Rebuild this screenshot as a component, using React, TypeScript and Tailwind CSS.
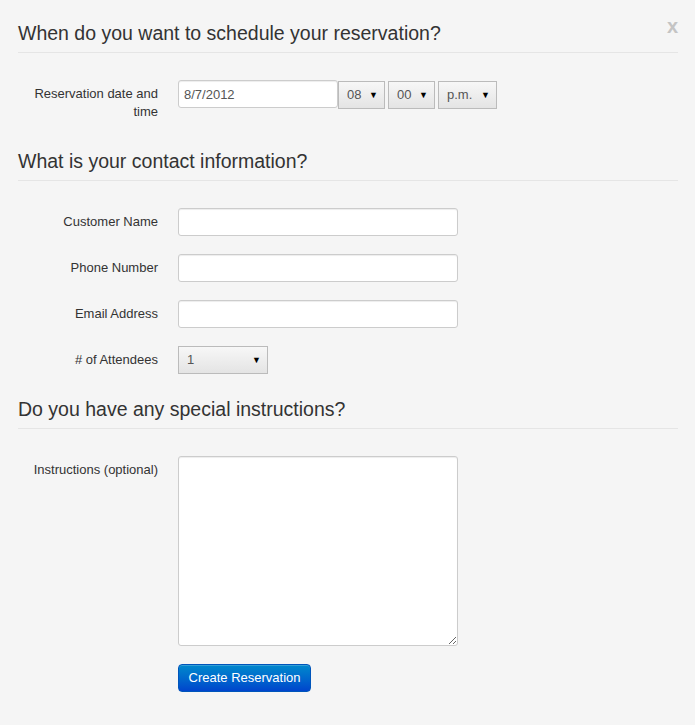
import { useState } from 'react';

type SelectProps = {
  value: string;
  options: string[];
  width: string;
  onChange: (v: string) => void;
};

// Bootstrap 2 style select: square box, light gradient, tiny arrow on the right.
function GradientSelect({ value, options, width, onChange }: SelectProps) {
  return (
    <div className={`relative h-[28px] ${width}`}>
      <select
        value={value}
        onChange={(e) => onChange(e.target.value)}
        className="h-full w-full appearance-none border border-[#bbbbbb] bg-gradient-to-b from-[#f7f7f7] to-[#e4e4e4] pl-[8px] text-[13px] text-[#555] outline-none"
      >
        {options.map((o) => (
          <option key={o} value={o}>
            {o}
          </option>
        ))}
      </select>
      <span className="pointer-events-none absolute right-[7px] top-[6px] text-[9px] leading-[16px] text-black">
        ▼
      </span>
    </div>
  );
}

function Legend({ children }: { children: React.ReactNode }) {
  return (
    <h3 className="mb-[27px] h-[41px] border-b border-[#e5e5e5] pt-[2px] text-[19.5px] font-normal leading-[38px] text-[#333]">
      {children}
    </h3>
  );
}

function Row({
  label,
  children,
  className = 'mb-[18px]',
}: {
  label: React.ReactNode;
  children: React.ReactNode;
  className?: string;
}) {
  return (
    <div className={`flex ${className}`}>
      <label className="w-[140px] shrink-0 pt-[5px] text-right leading-[18px] text-[#333]">
        {label}
      </label>
      <div className="ml-[20px] flex">{children}</div>
    </div>
  );
}

const inputCls =
  'h-[28px] rounded-[3px] border border-[#cccccc] bg-white px-[5px] text-[13px] text-[#555] shadow-[inset_0_1px_1px_rgba(0,0,0,0.075)] outline-none';

export default function App() {
  const [date, setDate] = useState('8/7/2012');
  const [hour, setHour] = useState('08');
  const [minute, setMinute] = useState('00');
  const [ampm, setAmpm] = useState('p.m.');
  const [attendees, setAttendees] = useState('1');

  const hours = Array.from({ length: 12 }, (_, i) => String(i + 1).padStart(2, '0'));
  const minutes = ['00', '15', '30', '45'];

  return (
    <div className="min-h-screen bg-[#f5f5f5] font-['Liberation_Sans',Arial,sans-serif] text-[13px] leading-[18px] text-[#333]">
      <form
        className="relative pl-[18px] pr-[17px] pt-[12px] pb-[33px]"
        onSubmit={(e) => e.preventDefault()}
      >
        <button
          type="button"
          className="absolute right-[17px] top-[17px] text-[20px] font-bold leading-[18px] text-[#c4c4c4]"
        >
          x
        </button>

        <Legend>When do you want to schedule your reservation?</Legend>
        <Row label="Reservation date and time" className="mb-[19px]">
          <input
            value={date}
            onChange={(e) => setDate(e.target.value)}
            className={`${inputCls} w-[160px]`}
          />
          <div className="mt-px flex gap-[3px]">
            <GradientSelect value={hour} options={hours} width="w-[47px]" onChange={setHour} />
            <GradientSelect value={minute} options={minutes} width="w-[47px]" onChange={setMinute} />
            <GradientSelect value={ampm} options={['a.m.', 'p.m.']} width="w-[59px]" onChange={setAmpm} />
          </div>
        </Row>

        <Legend>What is your contact information?</Legend>
        <Row label="Customer Name">
          <input className={`${inputCls} w-[280px]`} />
        </Row>
        <Row label="Phone Number">
          <input className={`${inputCls} w-[280px]`} />
        </Row>
        <Row label="Email Address">
          <input className={`${inputCls} w-[280px]`} />
        </Row>
        <Row label="# of Attendees" className="mb-[14px]">
          <GradientSelect
            value={attendees}
            options={['1', '2', '3', '4', '5', '6', '7', '8']}
            width="w-[90px]"
            onChange={setAttendees}
          />
        </Row>

        <Legend>Do you have any special instructions?</Legend>
        <Row label="Instructions (optional)">
          <textarea className={`${inputCls} h-[190px] w-[280px] py-[4px]`} />
        </Row>

        <div className="ml-[160px]">
          <button
            type="submit"
            className="h-[28px] w-[133px] rounded-[4px] border border-[#0055bb] bg-gradient-to-b from-[#0088cc] to-[#0044cc] text-[13px] text-white shadow-[inset_0_1px_0_rgba(255,255,255,0.2)]"
          >
            Create Reservation
          </button>
        </div>
      </form>
    </div>
  );
}
